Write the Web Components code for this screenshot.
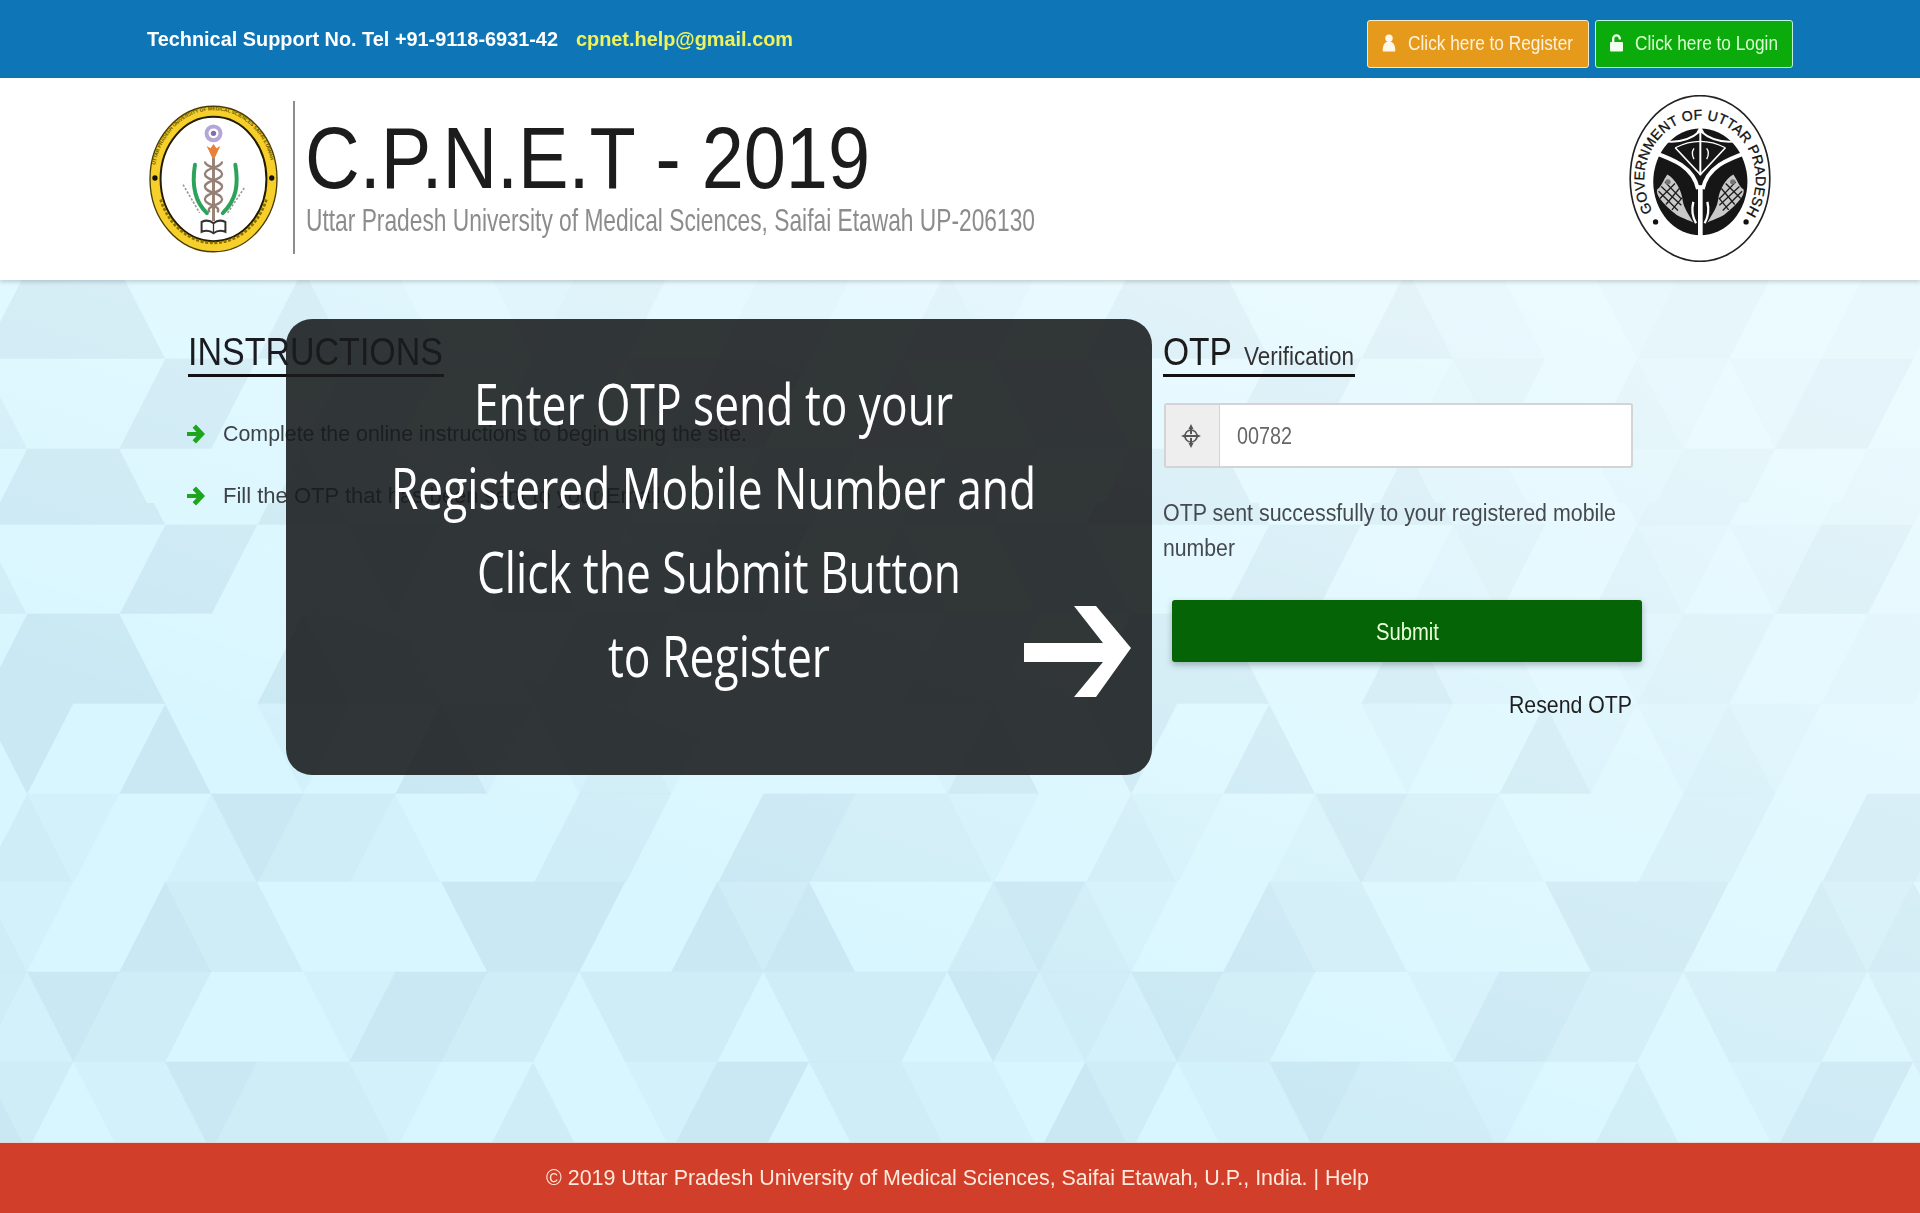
<!DOCTYPE html>
<html lang="en">
<head>
<meta charset="utf-8">
<title>C.P.N.E.T - 2019</title>
<style>
html,body{margin:0;padding:0;background:#fff}
body{font-family:"Liberation Sans",Arial,sans-serif;height:1213px;overflow:hidden;display:flex;flex-direction:column}
</style>
</head>
<body>
<cp-topbar>
  <fit-text slot="phone" w="411">Technical Support No. Tel +91-9118-6931-42</fit-text>
  <fit-text slot="mail" w="217">cpnet.help@gmail.com</fit-text>
  <cp-button slot="actions" tone="orange" icon="user" style="width:222.5px"><fit-text w="165">Click here to Register</fit-text></cp-button>
  <cp-button slot="actions" tone="green" icon="lock" style="width:198.5px"><fit-text w="143">Click here to Login</fit-text></cp-button>
</cp-topbar>
<cp-header>
  <cp-uni-logo slot="left"></cp-uni-logo>
  <fit-text slot="title" w="565">C.P.N.E.T - 2019</fit-text>
  <fit-text slot="sub" w="729">Uttar Pradesh University of Medical Sciences, Saifai Etawah UP-206130</fit-text>
  <cp-gov-logo slot="right"></cp-gov-logo>
</cp-header>
<cp-main>
  <cp-instructions slot="left">
    <fit-text slot="head" w="255">INSTRUCTIONS</fit-text>
    <cp-step><fit-text w="524">Complete the online instructions to begin using the site.</fit-text></cp-step>
    <cp-step><fit-text w="444">Fill the OTP that has been sent to your Email.</fit-text></cp-step>
  </cp-instructions>
  <cp-otp slot="right">
    <fit-text slot="h1" w="69">OTP</fit-text>
    <fit-text slot="h2" w="110">Verification</fit-text>
    <fit-text slot="value" w="55">00782</fit-text>
    <fit-text slot="msg" w="453">OTP sent successfully to your registered mobile</fit-text>
    <fit-text slot="msg" w="72">number</fit-text>
    <fit-text slot="submit" w="63">Submit</fit-text>
    <fit-text slot="resend" w="123">Resend OTP</fit-text>
  </cp-otp>
  <cp-notice slot="notice">
    <fit-text w="479" data-shift="1">Enter OTP send to your</fit-text>
    <fit-text w="645" data-shift="1">Registered Mobile Number and</fit-text>
    <fit-text w="484">Click the Submit Button</fit-text>
    <fit-text w="222">to Register</fit-text>
  </cp-notice>
</cp-main>
<cp-footer><fit-text w="823">© 2019 Uttar Pradesh University of Medical Sciences, Saifai Etawah, U.P., India. | Help</fit-text></cp-footer>

<script>
function def(name, html, extra){
  customElements.define(name, class extends HTMLElement{
    constructor(){
      super();
      this.attachShadow({mode:'open'}).innerHTML = html;
      if(extra) extra.call(this, this.shadowRoot);
    }
  });
}

def('cp-topbar', `<style>
:host{display:flex;flex:none;height:78px;box-sizing:border-box;padding:0 127px 0 147px;background:#0e76b6;justify-content:space-between}
.t{display:flex;align-items:center;gap:18px;font-size:21px;font-weight:700;color:#fff;height:77px}
::slotted([slot=mail]){color:#eef25c}
.a{display:flex;gap:5.5px;padding-top:20px;align-items:flex-start}
</style><div class="t"><slot name="phone"></slot><slot name="mail"></slot></div><div class="a"><slot name="actions"></slot></div>`);

def('cp-button', `<style>
:host{display:flex;align-items:center;box-sizing:border-box;height:48px;gap:12px;padding:0 0 3px 14.5px;border:1px solid #f6e8c8;border-radius:3px;font-size:21px}
:host([tone=orange]){background:#e59a1c;color:#fff2dc}
:host([tone=green]){background:#0bab0b;border-color:#c0f5dc;color:#d9ffd2}
svg{flex:none;display:none}
:host([icon=user]) .u,:host([icon=lock]) .l{display:block}
</style>
<svg class="u" width="14" height="18" viewBox="0 0 14 18"><circle cx="7" cy="4.2" r="3.7" fill="#fff8ea"/><path d="M.8 17.5C.3 10.5 3.4 7.6 7 7.6s6.700 2.900 6.200 9.900z" fill="#fff8ea"/></svg>
<svg class="l" width="13" height="18" viewBox="0 0 13 18"><path d="M3.200 9V4.600a3.300 3.300 0 0 1 6.600 0v1" fill="none" stroke="#f2fff0" stroke-width="2.300"/><rect y="8" width="13" height="9.500" rx="1" fill="#f2fff0"/></svg>
<slot></slot>`);

def('cp-header', `<style>
:host{display:flex;flex:none;position:relative;z-index:3;height:202px;box-sizing:border-box;padding:0 149px;background:#fff;align-items:center;justify-content:space-between;box-shadow:0 2px 4px rgba(60,60,60,.22)}
.l{display:flex;align-items:center;height:100%}
.sep{width:1.500px;height:153px;background:#8d8d8d;margin:-4px 10px 0 15px}
.tx{display:flex;flex-direction:column;align-items:flex-start;align-self:flex-start;padding-top:35.500px}
.a{font-size:88px;line-height:88px;color:#1c1c1c;height:88px}
.b{font-size:32px;line-height:36px;color:#8c8c8c;margin-left:1px}
</style>
<div class="l"><slot name="left"></slot><div class="sep"></div><div class="tx"><div class="a"><slot name="title"></slot></div><div class="b"><slot name="sub"></slot></div></div></div>
<slot name="right"></slot>`);

def('cp-uni-logo', `<style>:host{display:block;flex:none;width:129px;height:148px}svg{display:block}</style>
<svg width="129" height="148" viewBox="57 45 390 446">
<ellipse cx="252" cy="268" rx="192" ry="220" fill="#f6cf2a" stroke="#4a3d00" stroke-width="4"/>
<ellipse cx="252" cy="268" rx="160" ry="188" fill="#fff" stroke="#221c00" stroke-width="6"/>
<defs>
<path id="rt" d="M72 268A180 208 0 0 1 432 268"/>
</defs>
<text font-family="Liberation Sans" font-size="15" font-weight="700" fill="#6a5600"><textPath href="#rt" startOffset="7%" textLength="510">UTTAR PRADESH UNIVERSITY OF MEDICAL SCIENCES SAIFAI ETAWAH</textPath></text>
<path d="M92 330A170 198 0 0 0 412 330" fill="none" stroke="#8a7000" stroke-width="8" stroke-dasharray="9 5"/>
<circle cx="75" cy="265" r="8" fill="#111"/><circle cx="428" cy="265" r="8" fill="#111"/>
<circle cx="252" cy="130" r="27" fill="#b3a6d8"/><circle cx="252" cy="130" r="15" fill="#fff"/><circle cx="252" cy="130" r="8" fill="#7d70ac"/>
<path d="M252 212l-15-32-6-12 12 7 9-13 9 13 12-7-6 12z" fill="#e9803a"/>
<path d="M252 205V395" stroke="#9a8478" stroke-width="9"/>
<path d="M226 215c0 20 52 18 52 38s-52 18-52 38 52 18 52 38-52 18-38 40M278 215c0 20-52 18-52 38s52 18 52 38-52 18-52 38 52 18 38 40" fill="none" stroke="#958076" stroke-width="7"/>
<path d="M196 225c-10 60-2 110 36 146" fill="none" stroke="#2da35a" stroke-width="12" stroke-linecap="round"/>
<path d="M318 225c10 60 4 105-38 146" fill="none" stroke="#2da35a" stroke-width="12" stroke-linecap="round"/>
<path d="M160 285l50 85M345 295l-50 75" stroke="#9a9a9a" stroke-width="5" stroke-dasharray="7 5"/>
<path d="M216 398q20-10 36 4q16-14 36-4v30q-20-8-36 4q-16-12-36-4z" fill="#fff" stroke="#333" stroke-width="6"/>
<path d="M252 402v28" stroke="#333" stroke-width="4"/>
</svg>`);

def('cp-gov-logo', `<style>:host{display:block;flex:none;width:142px;height:167px;margin-top:-1px}svg{display:block}</style>
<svg width="142" height="167" viewBox="58 30 424 500">
<defs><path id="gt" d="M128 378A167 180 0 1 1 412 378"/>
<g id="fish">
<path d="M172 268C195 280 215 315 218 345C222 370 235 385 250 412C225 400 205 395 195 385C165 360 135 330 142 312C155 305 160 285 172 268z" fill="#c9c9c9"/>
<path d="M146 318l58 58M154 304l60 56M165 290l48 50M150 340l45-45M168 358l40-48M186 374l30-36" stroke="#1c1c1c" stroke-width="4" fill="none"/>
<circle cx="174" cy="290" r="8" fill="#777"/>
<path d="M250 350c-6 24-2 46 8 64" stroke="#fff" stroke-width="7" fill="none"/>
</g></defs>
<ellipse cx="270" cy="280" rx="209" ry="248" fill="#fff" stroke="#222" stroke-width="5"/>
<ellipse cx="271" cy="290" rx="141" ry="160" fill="#161616"/>
<path d="M126 200C190 222 250 245 264 312M416 200C352 222 292 245 278 312" fill="none" stroke="#fff" stroke-width="12"/>
<path d="M271 300V455" stroke="#fff" stroke-width="14"/>
<path d="M160 168Q225 178 271 138Q317 178 382 168" fill="none" stroke="#fff" stroke-width="6"/>
<path d="M196 188L271 268L346 188" fill="none" stroke="#fff" stroke-width="5"/>
<path d="M196 188Q271 150 346 188" fill="none" stroke="#fff" stroke-width="4"/>
<path d="M271 122V270" stroke="#fff" stroke-width="6"/>
<path d="M259 142l12-20 12 20z" fill="#fff"/>
<path d="M252 190q-10 14 0 32M290 190q10 14 0 32" fill="none" stroke="#fff" stroke-width="4"/>
<use href="#fish"/>
<use href="#fish" transform="translate(542 0) scale(-1 1)"/>
<text font-family="Liberation Sans" font-size="42" fill="#111" stroke="#111" stroke-width="1"><textPath href="#gt" textLength="752">GOVERNMENT OF UTTAR PRADESH</textPath></text>
<circle cx="137" cy="410" r="8" fill="#111"/><circle cx="408" cy="410" r="8" fill="#111"/>
</svg>`);

/* background: triangle lattice, read row by row from the reference */
function buildPattern(root){
  const pal=['#d8f6ff','#d3f1fb','#cfedf7','#c9e8f3'];
  const F='333000311001220011002100',G='003300120021013300100120',E='003001003101210000013003',
        D='210013221000220033222100',A='003220000333003230002321',B='132200013322022202220312',C='011322210020013302211032';
  const X1=27.6,X2=73.5,H=90,W=92,TOP=280;
  const upper=[[269,X1,F],[359,X2,G],[449,X1,F]];
  const lower=[[435,X1,F],[525,X2,G],[614,X1,F],[704,X2,E],[794,X1,D],[882,X2,A],[972,X1,B],[1062,X2,C]];
  const draw=rows=>rows.map(([y,x0,s])=>{
    let o='',yy=y-TOP;
    for(let k=-1;k<22;k++){
      const i=((k%12)+12)%12,x=x0+W*k;
      const u=pal[+s[i*2]],d=pal[+s[i*2+1]];
      o+=`<path d="M${x} ${yy}L${x-46} ${yy+H}H${x+46}z" fill="${u}" stroke="${u}" stroke-width=".6"/>`;
      o+=`<path d="M${x} ${yy}H${x+W}L${x+46} ${yy+H}z" fill="${d}" stroke="${d}" stroke-width=".6"/>`;
    }
    return o;}).join('');
  const holder=root.getElementById('bg');
  holder.innerHTML=`<svg width="1920" height="862" viewBox="0 0 1920 862" style="display:block;filter:blur(.7px)">
  <defs>
    <clipPath id="c1"><rect width="1920" height="223"/></clipPath>
    <clipPath id="c2"><rect y="223" width="1920" height="700"/></clipPath>
    <linearGradient id="wa" x1="0" y1="1" x2=".75" y2="0"><stop offset=".34" stop-color="#fff" stop-opacity="0"/><stop offset="1" stop-color="#fff" stop-opacity=".5"/></linearGradient>
  </defs>
  <rect width="1920" height="862" fill="#d8f6ff"/>
  <g clip-path="url(#c1)">${draw(upper)}</g>
  <g clip-path="url(#c2)">${draw(lower)}</g>
  <rect width="1920" height="862" fill="url(#wa)"/></svg>`;
}
def('cp-main', `<style>
:host{display:block;flex:none;position:relative;height:862px;overflow:hidden}
#bg{position:absolute;inset:0;background:#dcf4fb}
.c{position:relative;display:grid;grid-template-columns:975px 479px;padding:50px 0 0 188px}
</style><div id="bg"></div><div class="c"><slot name="left"></slot><slot name="right"></slot></div><slot name="notice"></slot>`, buildPattern);

def('cp-instructions', `<style>
:host{display:block}
.h{display:inline-block;font-size:39px;line-height:44px;height:44px;color:#1b1b22;border-bottom:3px solid #111;padding:0 1px 0 0;margin-bottom:42px}
.l{display:flex;flex-direction:column;gap:32px}
</style><div class="h"><slot name="head"></slot></div><div class="l"><slot></slot></div>`);

def('cp-step', `<style>
:host{display:flex;align-items:center;gap:18px;height:30px;font-size:22px;line-height:30px;color:#3d4247}
svg{flex:none;margin-left:-1px}
</style><svg width="18" height="20" viewBox="0 0 18 20"><path d="M9 .5L18 10l-9 9.500-3.400-3.200 3.900-4.300H0V8h9.500L5.600 3.700z" fill="#1ea51e"/></svg><slot></slot>`);

def('cp-otp', `<style>
:host{display:block;color:#222}
.h{display:inline-flex;align-items:baseline;gap:12px;height:44px;line-height:44px;border-bottom:3px solid #111;padding-right:1px;vertical-align:top}
.h1{font-size:38px;color:#1b1b1b}.h2{font-size:25px;color:#333}
.in{display:flex;box-sizing:border-box;width:469px;height:65px;margin:26px 0 0 1px;border:2px solid #d4d4d4;border-radius:3px;background:#fff}
.ad{flex:none;width:54px;box-sizing:border-box;padding-right:3px;display:flex;align-items:center;justify-content:center;background:#eee;border-right:1px solid #d4d4d4}
.v{display:flex;align-items:center;padding:2px 0 0 17px;font-size:23px;color:#666}
.m{margin-top:27.500px;font-size:23px;line-height:35px;color:#454a4e;display:flex;flex-direction:column;align-items:flex-start}
.s{display:flex;align-items:center;justify-content:center;box-sizing:border-box;padding-top:2px;width:470px;height:62px;margin:34.500px 0 0 9px;border-radius:3px;background:#056405;color:#e8ffd8;font-size:23px;box-shadow:0 3px 6px rgba(40,70,60,.35)}
.r{width:469px;margin-top:28px;text-align:right;font-size:24px;line-height:30px;color:#1e1e1e}
</style>
<div class="h"><span class="h1"><slot name="h1"></slot></span><span class="h2"><slot name="h2"></slot></span></div>
<div class="in"><div class="ad"><svg width="22" height="24" viewBox="0 0 22 24"><circle cx="11" cy="12" r="6" fill="none" stroke="#555" stroke-width="1.600"/><circle cx="11" cy="12" r="1.300" fill="#555"/><path d="M11 0l2.500 5h-1.500v5h-2V5H8.500zM11 24l2.500-5h-1.500v-5h-2v5H8.500zM1 12l5-2.200v1.200h4v2H6v1.200zM21 12l-5-2.200v1.200h-4v2h4v1.200z" fill="#555"/></svg></div><div class="v"><slot name="value"></slot></div></div>
<div class="m"><slot name="msg"></slot></div>
<div class="s"><slot name="submit"></slot></div>
<div class="r"><slot name="resend"></slot></div>`);

def('cp-notice', `<style>
:host{position:absolute;left:286px;top:39px;width:866px;height:456px;border-radius:26px;background:rgba(24,26,27,.88);color:#fff;font-family:"Open Sans","Noto Sans",sans-serif;font-size:56px;line-height:84px}
.l{display:flex;flex-direction:column;align-items:center;padding-top:41.500px}
svg{position:absolute;left:738px;top:287px}
::slotted([data-shift]){position:relative;left:-6px}
</style><div class="l"><slot></slot></div>
<svg width="107" height="91" viewBox="0 0 107 91"><path d="M50 0H72L107 42 72 91H50L79 56H0V37H79z" fill="#fff"/></svg>`);

def('cp-footer', `<style>
:host{display:flex;flex:1;align-items:center;justify-content:center;box-sizing:border-box;padding:0 5px 0 0;background:#d13f2a;border-top:1px solid #e6d8d4;font-size:22px;color:#ffe9dc}
</style><slot></slot>`);

/* defined last: its width reading needs every ancestor's shadow styles in place */
customElements.define('fit-text', class extends HTMLElement{
  constructor(){
    super();
    this.attachShadow({mode:'open'}).innerHTML=`<style>
    :host{display:inline-block;white-space:nowrap}
    span{display:inline-block;transform-origin:0 50%}
    </style><span id="s"><slot></slot></span>`;
  }
  connectedCallback(){
    const s=this.shadowRoot.getElementById('s'),w=+this.getAttribute('w');
    const n=s.getBoundingClientRect().width;
    this.style.width=w+'px';
    if(n>0) s.style.transform=`scaleX(${w/n})`;
  }
});
</script>
</body>
</html>
